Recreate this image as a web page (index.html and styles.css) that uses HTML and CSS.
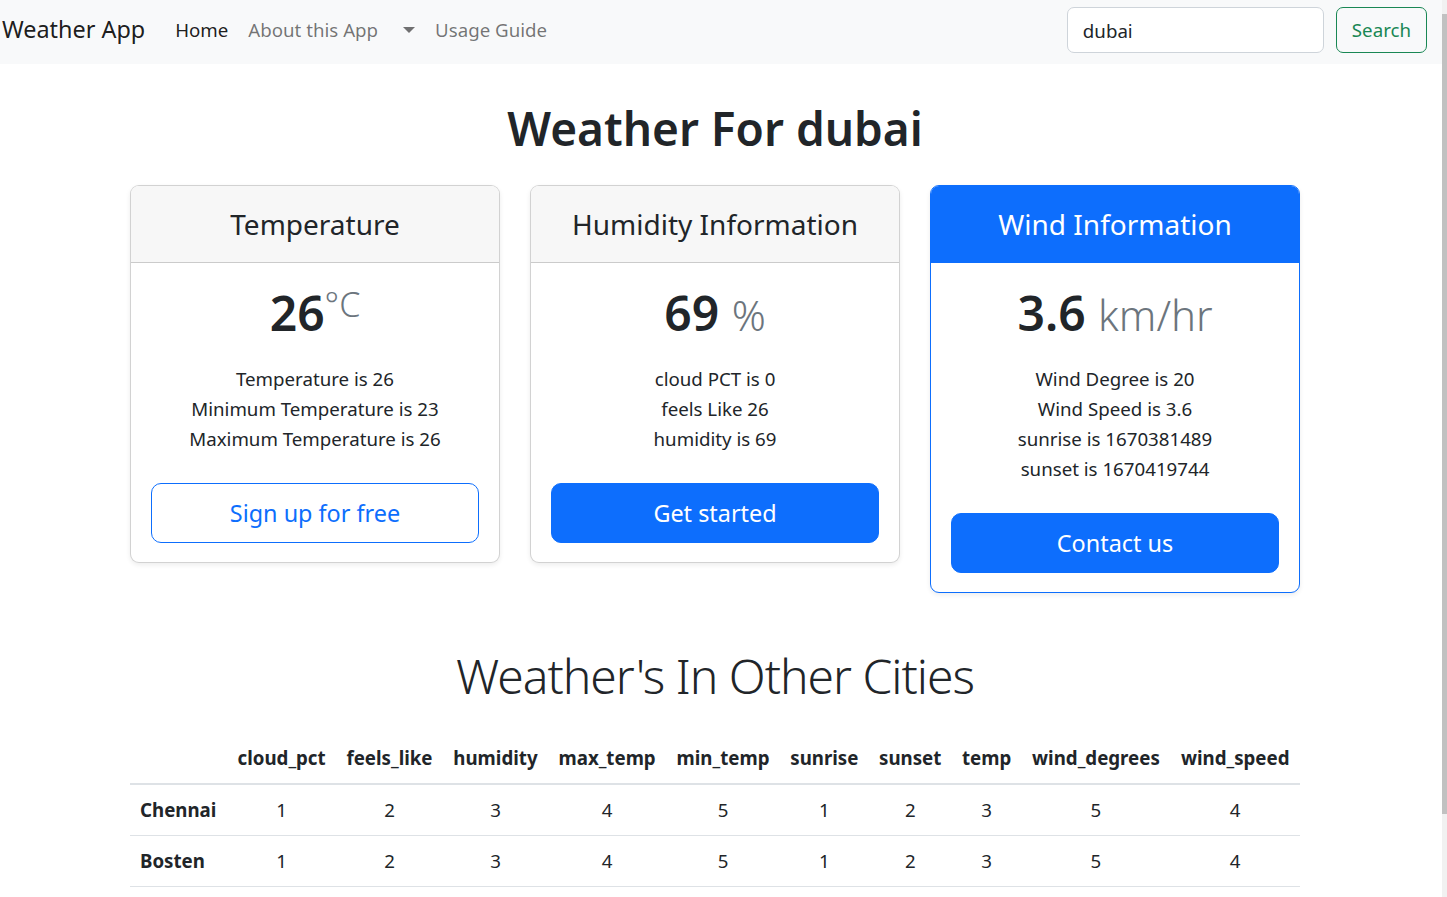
FILE: index.html
```html
<!DOCTYPE html>
<html lang="en">
<head>
<meta charset="utf-8">
<title>Weather App</title>
<link rel="stylesheet" href="styles.css">
</head>
<body>
<nav class="navbar">
  <a class="brand" href="#">Weather App</a>
  <ul class="nav">
    <li><a class="nav-link active" href="#">Home</a></li>
    <li><a class="nav-link" href="#">About this App</a></li>
    <li><a class="nav-link dropdown-toggle" href="#"></a></li>
    <li><a class="nav-link" href="#">Usage Guide</a></li>
  </ul>
  <form class="search">
    <input class="search-input" type="search" value="dubai">
    <button class="btn-search" type="button">Search</button>
  </form>
</nav>
<div class="scrollbar"><div class="scroll-thumb"></div></div>

<main class="wrap">
  <div class="container">
    <header class="page-head">
      <h1 class="page-title">Weather For dubai</h1>
    </header>

    <div class="cards">
      <div class="card">
        <div class="card-header"><h4 class="card-head-title">Temperature</h4></div>
        <div class="card-body">
          <h1 class="card-value">26<sup class="unit-sup">°C</sup></h1>
          <ul class="facts">
            <li>Temperature is 26</li>
            <li>Minimum Temperature is 23</li>
            <li>Maximum Temperature is 26</li>
          </ul>
          <button class="btn btn-outline" type="button">Sign up for free</button>
        </div>
      </div>

      <div class="card">
        <div class="card-header"><h4 class="card-head-title">Humidity Information</h4></div>
        <div class="card-body">
          <h1 class="card-value">69 <small class="unit">%</small></h1>
          <ul class="facts">
            <li>cloud PCT is 0</li>
            <li>feels Like 26</li>
            <li>humidity is 69</li>
          </ul>
          <button class="btn btn-primary" type="button">Get started</button>
        </div>
      </div>

      <div class="card card-primary">
        <div class="card-header header-primary"><h4 class="card-head-title">Wind Information</h4></div>
        <div class="card-body">
          <h1 class="card-value">3.6 <small class="unit">km/hr</small></h1>
          <ul class="facts">
            <li>Wind Degree is 20</li>
            <li>Wind Speed is 3.6</li>
            <li>sunrise is 1670381489</li>
            <li>sunset is 1670419744</li>
          </ul>
          <button class="btn btn-primary" type="button">Contact us</button>
        </div>
      </div>
    </div>

    <h2 class="section-title">Weather's In Other Cities</h2>

    <table class="table">
      <thead>
        <tr>
          <th></th>
          <th>cloud_pct</th>
          <th>feels_like</th>
          <th>humidity</th>
          <th>max_temp</th>
          <th>min_temp</th>
          <th>sunrise</th>
          <th>sunset</th>
          <th>temp</th>
          <th>wind_degrees</th>
          <th>wind_speed</th>
        </tr>
      </thead>
      <tbody>
        <tr>
          <th class="city">Chennai</th>
          <td>1</td><td>2</td><td>3</td><td>4</td><td>5</td><td>1</td><td>2</td><td>3</td><td>5</td><td>4</td>
        </tr>
        <tr>
          <th class="city">Bosten</th>
          <td>1</td><td>2</td><td>3</td><td>4</td><td>5</td><td>1</td><td>2</td><td>3</td><td>5</td><td>4</td>
        </tr>
      </tbody>
    </table>
  </div>
</main>
</body>
</html>
```

FILE: styles.css
```css
* { box-sizing: border-box; }

html, body {
  margin: 0;
  padding: 0;
}

body {
  font-family: "Noto Sans", "Open Sans", sans-serif;
  font-size: 18.7px;
  line-height: 1.5;
  color: #212529;
  background: #fff;
  width: 1442px;
}

/* ---------- navbar ---------- */
.navbar {
  display: flex;
  align-items: center;
  height: 64px;
  background: #f8f9fa;
  padding: 0 15px 4px 2px;
}

.brand {
  font-size: 23.4px;
  color: rgba(0, 0, 0, 0.9);
  text-decoration: none;
  margin-right: 20px;
  line-height: 1.5;
}

.nav {
  display: flex;
  list-style: none;
  margin: 0;
  padding: 0;
  flex: 1;
}

.nav-link {
  display: flex;
  align-items: center;
  padding: 10px;
  color: rgba(0, 0, 0, 0.55);
  text-decoration: none;
  line-height: 30px;
  height: 50px;
}

.nav-link.active { color: rgba(0, 0, 0, 0.9); }

.dropdown-toggle::after {
  content: "";
  display: inline-block;
  margin-left: 5px;
  border-top: 6px solid rgba(0, 0, 0, 0.55);
  border-left: 6px solid transparent;
  border-right: 6px solid transparent;
}

.search {
  display: flex;
  gap: 12px;
  margin: 0;
}

.search-input {
  width: 257px;
  height: 46px;
  padding: 7px 15px;
  font: inherit;
  color: #212529;
  background: #fff;
  border: 1px solid #ced4da;
  border-radius: 7px;
  outline: none;
}

.btn-search {
  height: 46px;
  padding: 7px 15px;
  font: inherit;
  color: #198754;
  background: transparent;
  border: 1px solid #198754;
  border-radius: 7px;
}

.scrollbar {
  position: fixed;
  top: 0;
  right: 0;
  width: 5px;
  height: 100%;
  background: #f1f1f1;
}

.scroll-thumb {
  margin-top: 14px;
  height: 800px;
  background: #c1c1c1;
}

/* ---------- main ---------- */
.wrap {
  padding-right: 12px;
}

.container {
  width: 1170px;
  margin: 0 auto;
}

.page-head {
  padding-top: 33px;
  text-align: center;
}

.page-title {
  margin: 0 0 26px;
  font-size: 46px;
  font-weight: 600;
  line-height: 62px;
}

.cards {
  display: grid;
  grid-template-columns: repeat(3, 1fr);
  gap: 30px;
  align-items: start;
  text-align: center;
}

.card {
  border: 1px solid rgba(0, 0, 0, 0.175);
  border-radius: 9px;
  background: #fff;
  box-shadow: 0 2px 5px rgba(0, 0, 0, 0.075);
  margin-bottom: 30px;
  overflow: hidden;
}

.card-header {
  padding: 20px;
  background: #f7f7f7;
  border-bottom: 1px solid rgba(0, 0, 0, 0.175);
}

.card-head-title {
  margin: 0;
  font-size: 28px;
  font-weight: 400;
  line-height: 36px;
}

.card-primary { border-color: #0d6efd; }

.header-primary {
  background: #0d6efd;
  color: #fff;
  border-bottom-color: #0d6efd;
}

.card-body { padding: 20px 20px 19px; }

.card-value {
  margin: 0;
  font-size: 48px;
  font-weight: 600;
  line-height: 60px;
}

.unit {
  font-size: 42px;
  font-weight: 300;
  color: #6c757d;
  line-height: 0;
}

.unit-sup {
  font-size: 34px;
  font-weight: 300;
  color: #6c757d;
  line-height: 0;
  vertical-align: baseline;
  position: relative;
  top: -14px;
}

.facts {
  list-style: none;
  margin: 21px 0 29px;
  padding: 0;
  line-height: 30px;
}

.btn {
  display: block;
  width: 100%;
  height: 60px;
  padding: 10px 20px;
  font: inherit;
  font-size: 23.4px;
  line-height: 37px;
  border-radius: 10px;
  border: 1px solid #0d6efd;
}

.btn-outline {
  color: #0d6efd;
  background: #fff;
}

.btn-primary {
  color: #fff;
  background: #0d6efd;
}

/* ---------- table ---------- */
.section-title {
  margin: 22px 0 26px;
  text-align: center;
  font-size: 48px;
  font-weight: 300;
  letter-spacing: -1px;
  line-height: 62px;
}

.table {
  width: 100%;
  border-collapse: collapse;
  margin-bottom: 20px;
}

.table th,
.table td {
  padding: 10px;
  line-height: 30px;
  text-align: center;
  border-bottom: 1px solid #dee2e6;
}

.table thead th {
  font-weight: 700;
  border-bottom: 2px solid #dee2e6;
}

.table .city {
  text-align: left;
  font-weight: 700;
}
```
